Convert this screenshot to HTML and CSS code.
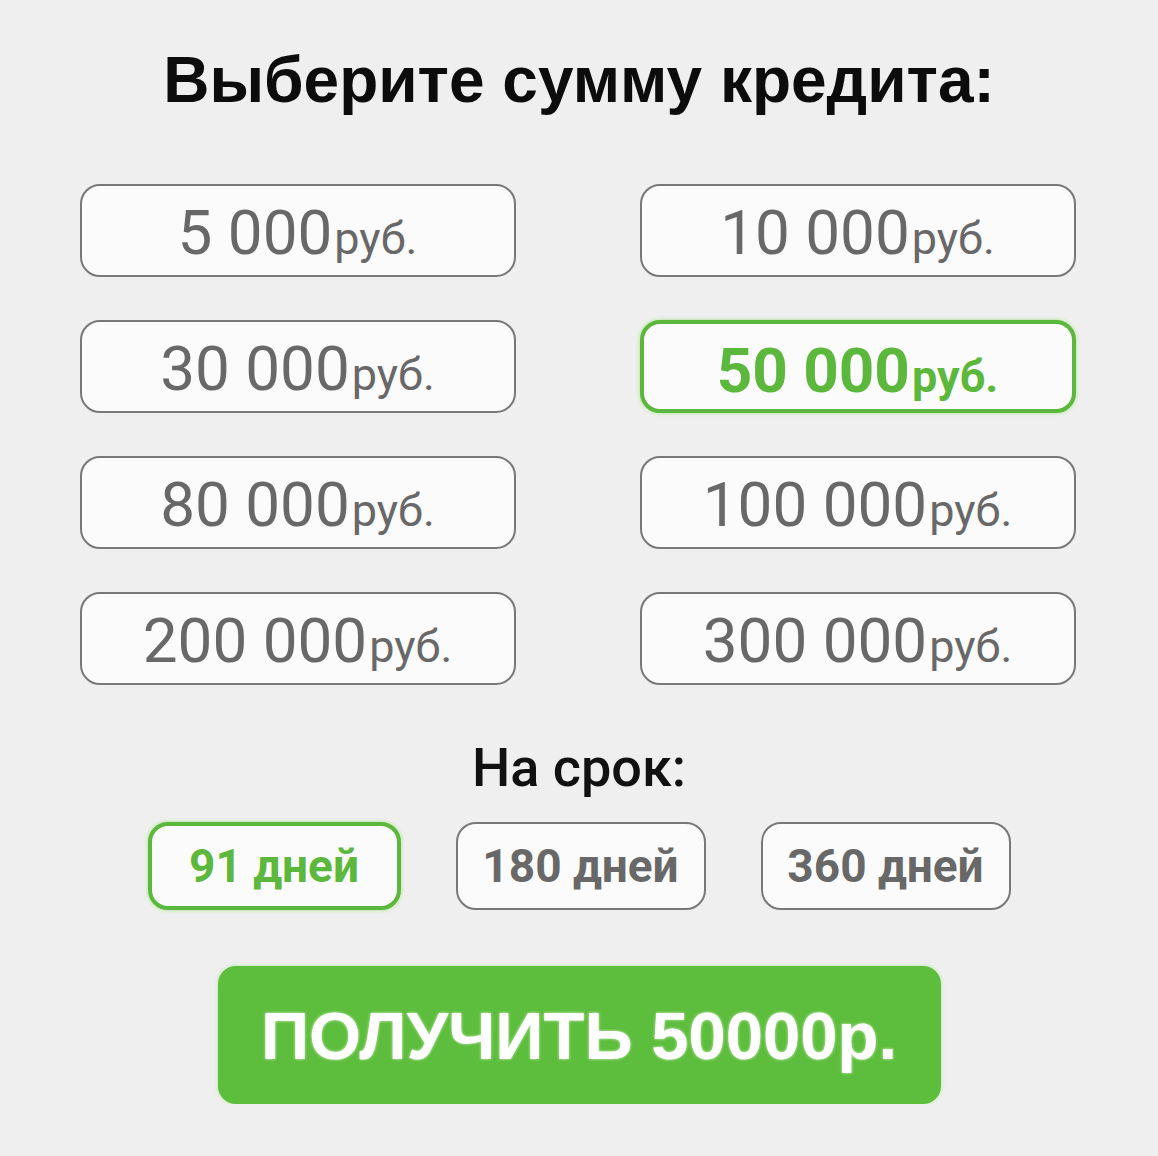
FILE: index.html
```html
<!DOCTYPE html>
<html lang="ru">
<head>
  <meta charset="UTF-8" />
  <meta name="viewport" content="width=device-width, initial-scale=1.0" />
  <title>Выберите сумму кредита</title>
  <link rel="stylesheet" href="styles.css">
</head>
<body>
  <div class="page">
    <h1 class="title">Выберите сумму кредита:</h1>

    <div class="amounts">
      <button class="amount">5 000<span class="cur">руб.</span></button>
      <button class="amount">10 000<span class="cur">руб.</span></button>
      <button class="amount">30 000<span class="cur">руб.</span></button>
      <button class="amount active">50 000<span class="cur">руб.</span></button>
      <button class="amount">80 000<span class="cur">руб.</span></button>
      <button class="amount">100 000<span class="cur">руб.</span></button>
      <button class="amount">200 000<span class="cur">руб.</span></button>
      <button class="amount">300 000<span class="cur">руб.</span></button>
    </div>

    <h2 class="subtitle">На срок:</h2>

    <div class="terms">
      <button class="term active">91 дней</button>
      <button class="term">180 дней</button>
      <button class="term">360 дней</button>
    </div>

    <button class="submit">ПОЛУЧИТЬ 50000р.</button>
  </div>
</body>
</html>
```

FILE: styles.css
```css
body {
  margin: 0;
  background-color: #efefef;
  color: #111;
}
.page {
  display: flex;
  flex-direction: column;
  align-items: center;
  padding-top: 40px;
}
.title {
  margin: 0;
  font-family: 'Liberation Sans', Arial, sans-serif;
  font-weight: bold;
  font-size: 64px;
  line-height: 80px;
  color: #0c0c0c;
}
button {
  font-family: Roboto, sans-serif;
  background: #fbfbfb;
  color: #686868;
  border: 2px solid #787878;
  cursor: pointer;
  padding: 0;
  display: flex;
  justify-content: center;
  align-items: center;
}
.amounts {
  margin-top: 64px;
  margin-right: 3px;
  display: grid;
  grid-template-columns: 436px 436px;
  column-gap: 124px;
  row-gap: 43px;
}
.amount {
  height: 93px;
  border-radius: 20px;
  font-size: 62px;
  font-weight: 400;
  line-height: 1;
  align-items: baseline;
  padding-top: 16px;
}
.amount .cur {
  font-size: 45px;
  margin-left: 2px;
}
.amount.active, .term.active {
  border: 4px solid #5cb83c;
  color: #5cb83c;
  font-weight: bold;
  box-shadow: 0 0 4px #a8e58c;
}
.subtitle {
  margin: 53px 0 0;
  font-family: Roboto, sans-serif;
  font-weight: 500;
  font-size: 54px;
  line-height: 60px;
  color: #111;
}
.terms {
  margin-top: 24px;
  display: flex;
  gap: 55px;
}
.term {
  width: 250px;
  height: 88px;
  border-radius: 20px;
  font-size: 46px;
  font-weight: bold;
}
.term.active {
  width: 253px;
}
.submit {
  margin-top: 56px;
  width: 723px;
  height: 138px;
  border: none;
  border-radius: 18px;
  background: #5dbd3c;
  color: #fff;
  font-family: 'Liberation Sans', Arial, sans-serif;
  font-weight: bold;
  font-size: 67px;
  box-shadow: 0 0 4px #b8eaa0;
  text-shadow: 0 0 3px #d8f5c8;
}
```
